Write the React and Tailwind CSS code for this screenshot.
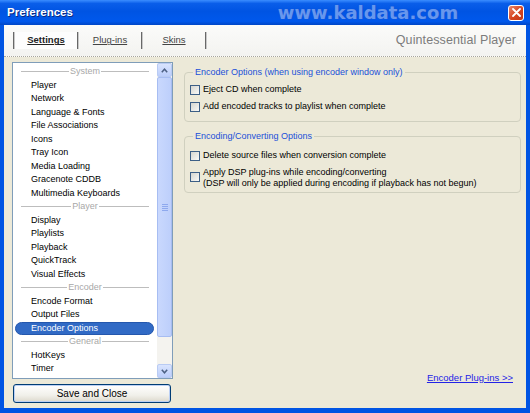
import { useState } from 'react'

const SECTIONS = [
  {
    title: 'System',
    items: ['Player', 'Network', 'Language & Fonts', 'File Associations', 'Icons', 'Tray Icon', 'Media Loading', 'Gracenote CDDB', 'Multimedia Keyboards'],
  },
  { title: 'Player', items: ['Display', 'Playlists', 'Playback', 'QuickTrack', 'Visual Effects'] },
  { title: 'Encoder', items: ['Encode Format', 'Output Files', 'Encoder Options'] },
  { title: 'General', items: ['HotKeys', 'Timer'] },
]

const TABS = ['Settings', 'Plug-ins', 'Skins']

// ─── Title bar ───────────────────────────────────────────────────────────────
function TitleBar() {
  return (
    <div className="h-[25px] flex items-center pl-[7px] pr-[6px] bg-[linear-gradient(#3b8dff_0%,#0a5ee9_14%,#0054e3_45%,#0058ec_85%,#0046c6_100%)]">
      <span className="text-white font-bold text-[11.5px] [text-shadow:1px_1px_0_#0a2a80]">Preferences</span>
      <span className="ml-[205px] font-['DejaVu_Sans',sans-serif] font-bold text-[18px] leading-none text-[#6797ee] [text-shadow:0_0_1px_#2552c4]">
        www.kaldata.com
      </span>
      <button className="ml-auto w-[16px] h-[16px] rounded-[3px] border border-white bg-[linear-gradient(135deg,#e8876c,#d6441f_55%,#c0381a)] flex items-center justify-center">
        <svg width="9" height="9" viewBox="0 0 9 9">
          <path d="M1 1 L8 8 M8 1 L1 8" stroke="white" strokeWidth="1.8" strokeLinecap="round" />
        </svg>
      </button>
    </div>
  )
}

// ─── Tab strip ───────────────────────────────────────────────────────────────
function TabStrip({ active }) {
  return (
    <div className="h-[32px] flex items-center pl-[9px] pr-[10px] bg-[linear-gradient(#fbfbfa,#f3f3f0)] border-b border-dotted border-[#a8a69c]">
      <Separator />
      {TABS.map((t) => (
        <div key={t} className="flex items-center">
          <div
            className={`w-[62px] h-[17px] flex items-center justify-center text-[9.5px] underline ${
              t === active ? 'font-bold text-[#222] bg-[#fdfdfd]' : 'text-[#444]'
            }`}
          >
            {t}
          </div>
          <Separator />
        </div>
      ))}
      <span className="ml-auto text-[12.5px] text-[#7c7c7c] tracking-[0.1px]">Quintessential Player</span>
    </div>
  )
}

function Separator() {
  return <div className="w-[2px] h-[17px] bg-[#686868] border-r border-[#c8c8c8]" />
}

// ─── Left list ───────────────────────────────────────────────────────────────
function GroupHeader({ title }) {
  return (
    <div className="h-[13.5px] flex items-center px-[8px] gap-[1px]">
      <div className="flex-1 h-px bg-[#bdbdbd]" />
      <span className="text-[#a8a8a8]">{title}</span>
      <div className="flex-1 h-px bg-[#bdbdbd]" />
    </div>
  )
}

function ListItem({ label, selected, onClick }) {
  if (selected) {
    return (
      <div className="h-[13.5px] flex items-center pl-[2px] pr-[3px]">
        <div className="w-full h-[13px] rounded-full bg-[#316ac5] border border-[#2457ad] pl-[15px] flex items-center text-white">
          {label}
        </div>
      </div>
    )
  }
  return (
    <div onClick={onClick} className="h-[13.5px] flex items-center pl-[18px] text-black cursor-default">
      {label}
    </div>
  )
}

function ScrollArrow({ up }) {
  return (
    <div className="h-[14px] rounded-[2px] border border-[#b9cbf3] bg-[linear-gradient(#d9e4fe,#bccefb)] flex items-center justify-center">
      <svg width="7" height="5" viewBox="0 0 7 5">
        <path d={up ? 'M0.8 4.2 L3.5 1.2 L6.2 4.2' : 'M0.8 0.8 L3.5 3.8 L6.2 0.8'} fill="none" stroke="#4d6185" strokeWidth="1.5" />
      </svg>
    </div>
  )
}

function ScrollBar() {
  return (
    <div className="w-[15px] flex flex-col bg-[#f4f3ef]">
      <ScrollArrow up />
      <div className="h-[260px] rounded-[2px] border border-[#a7bdf2] bg-[linear-gradient(90deg,#c9d8fd,#bdcffb)] flex flex-col items-center justify-center gap-[1px]">
        <div className="w-[6px] h-px bg-[#8ea9ee]" />
        <div className="w-[6px] h-px bg-[#8ea9ee]" />
        <div className="w-[6px] h-px bg-[#8ea9ee]" />
        <div className="w-[6px] h-px bg-[#8ea9ee]" />
      </div>
      <div className="flex-1" />
      <ScrollArrow />
    </div>
  )
}

function CategoryList({ selected, onSelect }) {
  return (
    <div className="w-[161px] h-[317px] border border-[#7f9db9] bg-white flex">
      <div className="flex-1 overflow-hidden pt-[2px] text-[9px]">
        {SECTIONS.map((s) => (
          <div key={s.title}>
            <GroupHeader title={s.title} />
            {s.items.map((it) => (
              <ListItem key={it} label={it} selected={it === selected} onClick={() => onSelect(it)} />
            ))}
          </div>
        ))}
      </div>
      <ScrollBar />
    </div>
  )
}

// ─── Right panel ─────────────────────────────────────────────────────────────
function CheckBox({ checked, onChange }) {
  return (
    <div
      onClick={onChange}
      className="w-[10px] h-[10px] shrink-0 border border-[#3d5f86] bg-[linear-gradient(135deg,#d6d6cf,#f9f9f7)] flex items-center justify-center"
    >
      {checked && (
        <svg width="7" height="7" viewBox="0 0 7 7">
          <path d="M1 3.5 L3 5.5 L6 1.5" fill="none" stroke="#21a121" strokeWidth="1.4" />
        </svg>
      )}
    </div>
  )
}

function Group({ title, className, children }) {
  return (
    <fieldset className={`border border-[#d0d0bf] rounded-[4px] pl-[5px] ${className}`}>
      <legend className="ml-[3px] px-[2px] text-[#2150d8] leading-[12px]">{title}</legend>
      {children}
    </fieldset>
  )
}

function OptionRow({ label, note, checked, onToggle }) {
  if (note) {
    return (
      <div className="flex items-start gap-[3px] leading-[11px]">
        <div className="pt-[4.5px]">
          <CheckBox checked={checked} onChange={onToggle} />
        </div>
        <div>
          <div>{label}</div>
          <div>{note}</div>
        </div>
      </div>
    )
  }
  return (
    <div className="h-[17px] flex items-center gap-[3px]">
      <CheckBox checked={checked} onChange={onToggle} />
      <span>{label}</span>
    </div>
  )
}

function EncoderOptions() {
  const [opts, setOpts] = useState({ eject: false, addToPlaylist: false, deleteSource: false, applyDsp: false })
  const toggle = (k) => setOpts((o) => ({ ...o, [k]: !o[k] }))

  return (
    <div className="flex-1 flex flex-col text-[9px] text-black">
      <Group title="Encoder Options (when using encoder window only)" className="mt-[9px] pt-[3px] pb-[6px]">
        <OptionRow label="Eject CD when complete" checked={opts.eject} onToggle={() => toggle('eject')} />
        <OptionRow label="Add encoded tracks to playlist when complete" checked={opts.addToPlaylist} onToggle={() => toggle('addToPlaylist')} />
      </Group>
      <Group title="Encoding/Converting Options" className="mt-[8px] pt-[5px] pb-[3px]">
        <OptionRow label="Delete source files when conversion complete" checked={opts.deleteSource} onToggle={() => toggle('deleteSource')} />
        <div className="pt-[3px]">
          <OptionRow
            label="Apply DSP plug-ins while encoding/converting"
            note="(DSP will only be applied during encoding if playback has not begun)"
            checked={opts.applyDsp}
            onToggle={() => toggle('applyDsp')}
          />
        </div>
      </Group>
      <div className="mt-auto mb-[23px] mr-[8px] self-end">
        <a href="#" className="text-[9.5px] text-[#2323e6] underline">Encoder Plug-ins &gt;&gt;</a>
      </div>
    </div>
  )
}

// ─── Main export ─────────────────────────────────────────────────────────────
export default function App() {
  const [selected, setSelected] = useState('Encoder Options')

  return (
    <div className="w-[530px] h-[413px] flex flex-col bg-[#0054e3] font-['Liberation_Sans',Arial,sans-serif] overflow-hidden">
      <TitleBar />
      <div className="flex-1 mx-[4px] mb-[5px] flex flex-col bg-[#ece9d8]">
        <TabStrip active="Settings" />
        <div className="flex-1 flex pl-[8px] pr-[5px]">
          <div className="w-[161px] pt-[5px] flex flex-col">
            <CategoryList selected={selected} onSelect={setSelected} />
            <button className="mt-[5px] ml-[1px] w-[158px] h-[19px] rounded-[3px] border border-[#003c74] bg-[linear-gradient(#ffffff,#f1f0ea_60%,#dcd8cc)] shadow-[inset_0_0_0_1px_#bcd0f4] text-[10px] text-black">
              Save and Close
            </button>
          </div>
          <div className="ml-[11px] flex-1 flex">
            <EncoderOptions />
          </div>
        </div>
      </div>
    </div>
  )
}
